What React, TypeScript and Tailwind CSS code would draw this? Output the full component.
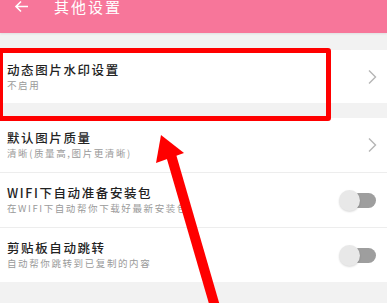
import React from "react";

const font = { fontFamily: '"Noto Sans CJK SC", "Noto Sans", sans-serif' };

const Chevron = () => (
  <svg width="10" height="16" viewBox="0 0 10 16" className="text-[#b5b5b5]">
    <path d="M2 1.5 L8.5 8 L2 14.5" fill="none" stroke="currentColor" strokeWidth="1.4" />
  </svg>
);

const Toggle = () => (
  <div className="relative w-[38px] h-[22px] flex items-center">
    <div className="absolute left-[12px] w-[25px] h-[15px] rounded-full bg-[#9e9e9e]" />
    <div className="absolute left-0 w-[21px] h-[21px] rounded-full bg-[#e8e8e8] shadow-[0_1px_2px_rgba(0,0,0,0.15)]" />
  </div>
);

type RowProps = {
  title: string;
  sub: string;
  right: React.ReactNode;
  h: string;
  border?: boolean;
};

const Row = ({ title, sub, right, h, border }: RowProps) => (
  <div
    className={`flex items-center justify-between bg-white pl-[7px] pr-[10px] ${h} ${
      border ? "border-b border-[#ededed]" : ""
    }`}
  >
    <div className="flex flex-col">
      <span className="text-[12.5px] leading-[16px] font-medium text-[#222] tracking-[1.6px]">{title}</span>
      <span className="text-[9.5px] leading-[14px] text-[#9a9a9a] tracking-[1.6px]">{sub}</span>
    </div>
    {right}
  </div>
);

export default function App() {
  return (
    <div className="relative w-[387px] h-[303px] overflow-hidden bg-[#f2f2f2]" style={font}>
      <div className="h-[33px] bg-[#f7769a] flex items-start shadow-[0_1px_2px_rgba(0,0,0,0.08)]">
        <div className="flex items-center h-[13px] pl-[14px] gap-[25px]">
          <svg width="15" height="13" viewBox="0 0 15 13">
            <path d="M14 6.5 H2 M7 1.5 L2 6.5 L7 11.5" fill="none" stroke="white" strokeWidth="1.6" />
          </svg>
          <span className="text-[15px] text-white tracking-[2px] leading-none">其他设置</span>
        </div>
      </div>

      <div className="mt-[17px]">
        <Row title="动态图片水印设置" sub="不启用" right={<Chevron />} h="h-[53px]" />
      </div>

      <div className="mt-[15px]">
        <Row title="默认图片质量" sub="清晰(质量高,图片更清晰)" right={<Chevron />} h="h-[55px]" border />
        <Row
          title="WIFI下自动准备安装包"
          sub="在WIFI下自动帮你下载好最新安装包"
          right={<Toggle />}
          h="h-[55px]"
          border
        />
        <Row title="剪贴板自动跳转" sub="自动帮你跳转到已复制的内容" right={<Toggle />} h="h-[54px]" />
      </div>

      <div className="absolute left-[-2px] top-[48px] w-[333px] h-[73px] border-[5px] border-[#ff0000] rounded-[3px]" />

      <svg className="absolute left-0 top-0" width="387" height="303" viewBox="0 0 387 303">
        <line x1="171" y1="155" x2="216" y2="310" stroke="#ff0000" strokeWidth="10" />
        <polygon points="161,135 156,163 184,153" fill="#ff0000" />
      </svg>
    </div>
  );
}
